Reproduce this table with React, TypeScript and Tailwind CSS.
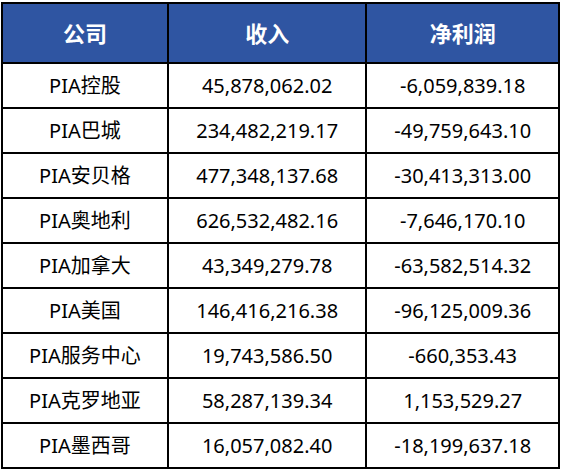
import React from "react";

const rows = [
  ["PIA控股", "45,878,062.02", "-6,059,839.18"],
  ["PIA巴城", "234,482,219.17", "-49,759,643.10"],
  ["PIA安贝格", "477,348,137.68", "-30,413,313.00"],
  ["PIA奥地利", "626,532,482.16", "-7,646,170.10"],
  ["PIA加拿大", "43,349,279.78", "-63,582,514.32"],
  ["PIA美国", "146,416,216.38", "-96,125,009.36"],
  ["PIA服务中心", "19,743,586.50", "-660,353.43"],
  ["PIA克罗地亚", "58,287,139.34", "1,153,529.27"],
  ["PIA墨西哥", "16,057,082.40", "-18,199,637.18"],
];

export default function App() {
  return (
    <div className="w-[564px] h-[473px] bg-white pt-[2px] pl-[1px]">
      <table
        className="border-collapse border-2 border-black w-[559px] text-[20px] text-black"
        style={{ fontFamily: '"Noto Sans", "Noto Sans CJK SC", sans-serif' }}
      >
        <colgroup>
          <col className="w-[167px]" />
          <col className="w-[199px]" />
          <col className="w-[193px]" />
        </colgroup>
        <thead>
          <tr className="h-[60px] bg-[#2f55a2] text-white">
            <th className="border-2 border-black font-bold text-[22px]">公司</th>
            <th className="border-2 border-black font-bold text-[22px]">收入</th>
            <th className="border-2 border-black font-bold text-[22px]">净利润</th>
          </tr>
        </thead>
        <tbody>
          {rows.map((r) => (
            <tr key={r[0]} className="h-[45px]">
              <td className="border-2 border-black text-center">{r[0]}</td>
              <td className="border-2 border-black text-center">{r[1]}</td>
              <td className="border-2 border-black text-center">{r[2]}</td>
            </tr>
          ))}
        </tbody>
      </table>
    </div>
  );
}
